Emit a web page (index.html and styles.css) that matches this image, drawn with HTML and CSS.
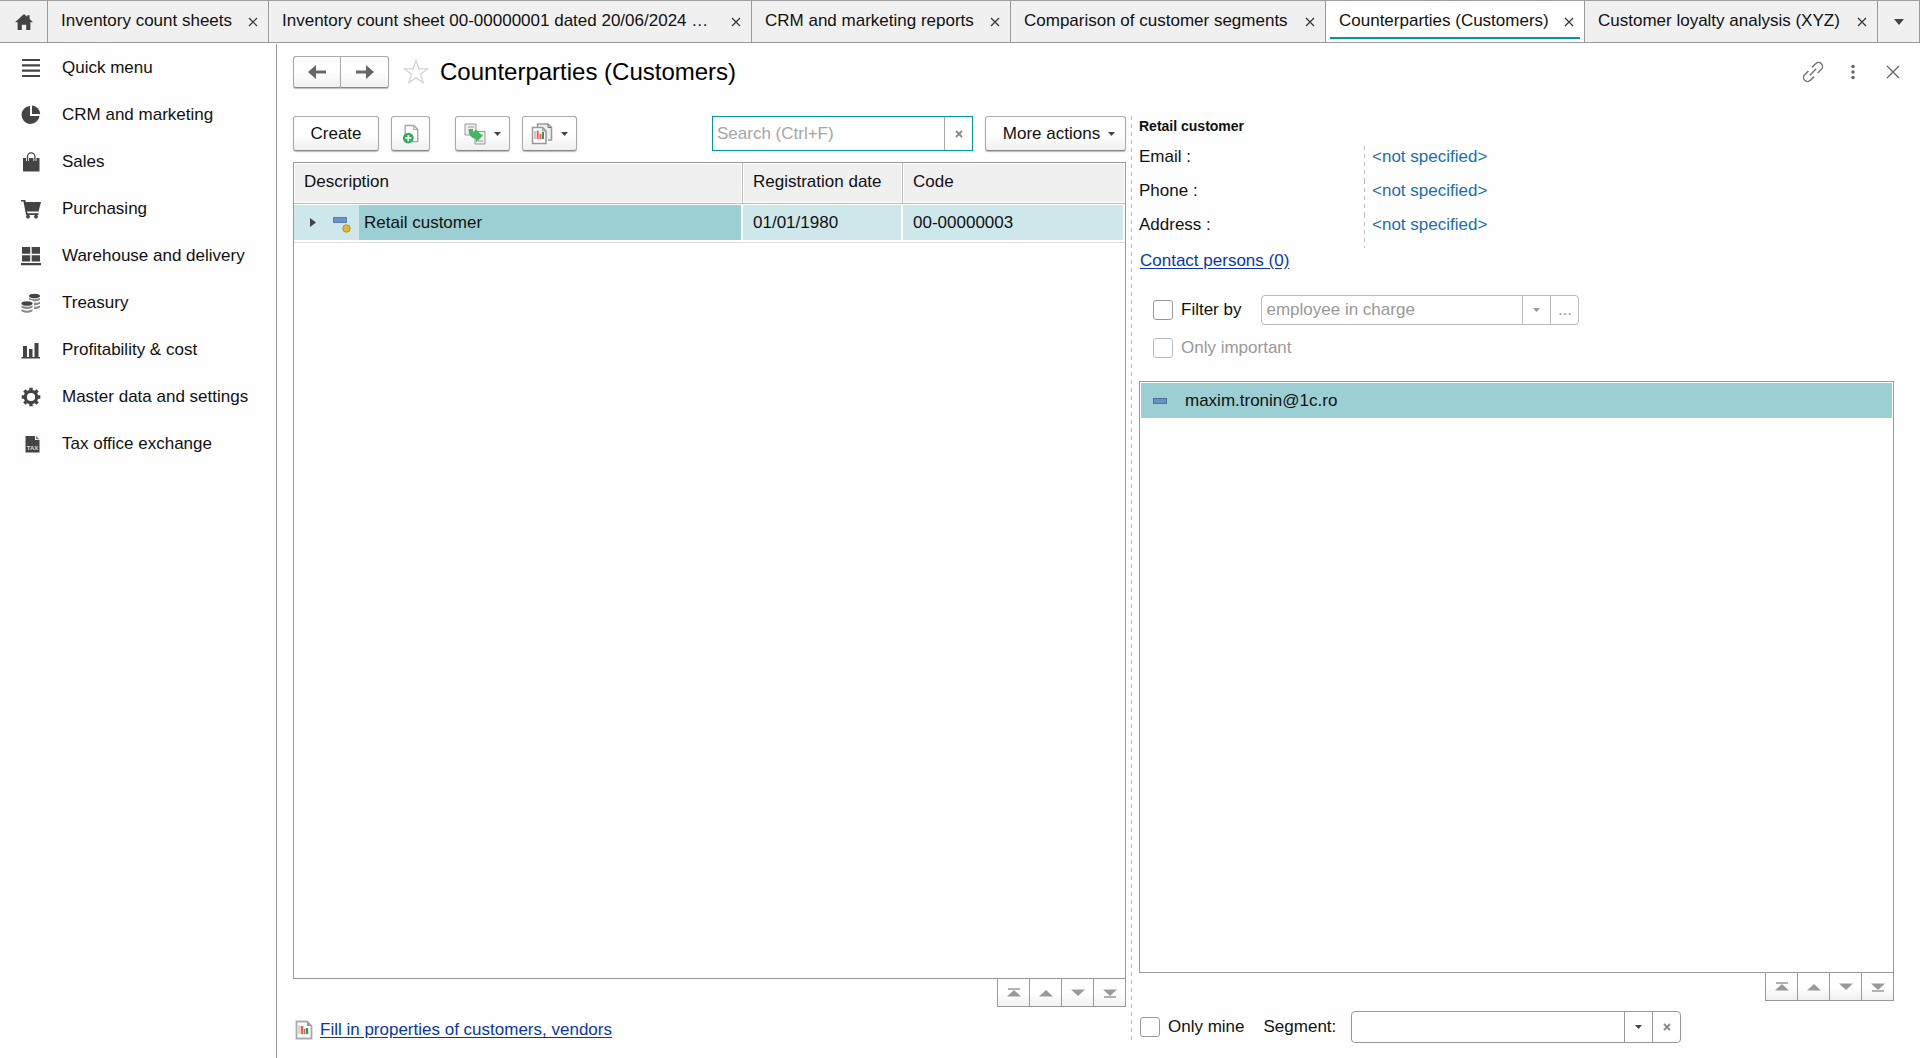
FILE: index.html
```html
<!DOCTYPE html>
<html lang="en">
<head>
  <meta charset="UTF-8" />
  <title>Counterparties (Customers)</title>
  <link rel="stylesheet" href="styles.css">
</head>
<body>
  <nav class="tabs">
    <button class="tab-btn" aria-label="Home">
      <svg width="18" height="16" viewBox="0 0 18 16"><path d="M9 0L0 8.2h2.600V16h4.200v-5.200h4.400V16h4.200V8.200H18L14.600 5V1.200h-2.400v1.600z" fill="#444"/></svg>
    </button>
    <div class="tab"><a href="#">Inventory count sheets</a><button class="tab-close" aria-label="Close"><svg width="10" height="10" viewBox="0 0 10 10"><path d="M1 1l8 8M9 1l-8 8"/></svg></button></div>
    <div class="tab"><a href="#">Inventory count sheet 00-00000001 dated 20/06/2024 …</a><button class="tab-close" aria-label="Close"><svg width="10" height="10" viewBox="0 0 10 10"><path d="M1 1l8 8M9 1l-8 8"/></svg></button></div>
    <div class="tab"><a href="#">CRM and marketing reports</a><button class="tab-close" aria-label="Close"><svg width="10" height="10" viewBox="0 0 10 10"><path d="M1 1l8 8M9 1l-8 8"/></svg></button></div>
    <div class="tab"><a href="#">Comparison of customer segments</a><button class="tab-close" aria-label="Close"><svg width="10" height="10" viewBox="0 0 10 10"><path d="M1 1l8 8M9 1l-8 8"/></svg></button></div>
    <div class="tab active"><a href="#">Counterparties (Customers)</a><button class="tab-close" aria-label="Close"><svg width="10" height="10" viewBox="0 0 10 10"><path d="M1 1l8 8M9 1l-8 8"/></svg></button></div>
    <div class="tab"><a href="#">Customer loyalty analysis (XYZ)</a><button class="tab-close" aria-label="Close"><svg width="10" height="10" viewBox="0 0 10 10"><path d="M1 1l8 8M9 1l-8 8"/></svg></button></div>
    <button class="tab-btn" aria-label="All tabs">
      <svg width="10" height="6" viewBox="0 0 10 6"><path d="M0 0h10L5 6z" fill="#444"/></svg>
    </button>
  </nav>

  <div class="layout">
    <aside class="sidebar">
      <a href="#"><svg width="20" height="20" viewBox="0 0 20 20"><path d="M1 2h18M1 7.300h18M1 12.700h18M1 18h18" stroke="#444" stroke-width="2.200"/></svg>Quick menu</a>
      <a href="#"><svg width="20" height="20" viewBox="0 0 20 20"><path d="M9 1v10h9.500A9 9 0 1 1 9 1z" fill="#444"/><path d="M11 .6A9 9 0 0 1 19.200 9H11z" fill="#444"/></svg>CRM and marketing</a>
      <a href="#"><svg width="20" height="20" viewBox="0 0 20 20"><path d="M2 6h16.500v13.500H2z" fill="#444"/><path d="M6.500 9V4.500a3.700 3.700 0 0 1 7.400 0V9" fill="none" stroke="#fff" stroke-width="3"/><path d="M6.500 9V4.500a3.700 3.700 0 0 1 7.400 0V9" fill="none" stroke="#444" stroke-width="1.300"/></svg>Sales</a>
      <a href="#"><svg width="20" height="20" viewBox="0 0 20 20"><path d="M0 1h4.200l.6 2H20l-2.500 9.500H6l.5 1.800h11V16H5L2.500 2.500H0z" fill="#444"/><circle cx="7" cy="17.700" r="1.900" fill="#444"/><circle cx="15" cy="17.700" r="1.900" fill="#444"/></svg>Purchasing</a>
      <a href="#"><svg width="20" height="20" viewBox="0 0 20 20"><path d="M1 1h8.200v6.700H1zM10.700 1H19v6.700h-8.300zM1 9.200h8.200v6.300H1zM10.700 9.200H19v6.300h-8.300zM0 17h20v2.200H0z" fill="#444"/></svg>Warehouse and delivery</a>
      <a href="#"><svg width="20" height="20" viewBox="0 0 20 20"><ellipse cx="13.500" cy="3" rx="5.500" ry="2.300" fill="#444"/><path d="M8 5q5.500 2.500 11 0V7q-2.500 1.400-6 1.500Q12 7 8 6.800zM13 10q3.500 0 6-1.300v2q-2.500 1.500-6 1.500zM13 13.700q3.500 0 6-1.300v2q-2.500 1.500-6 1.500z" fill="#888"/><ellipse cx="6" cy="10.500" rx="5.500" ry="2.300" fill="#444"/><path d="M.5 12.500q5.500 2.700 11 0v2q-5.500 3-11 0zM.5 16.300q5.500 2.700 11 0v2q-5.500 3-11 0z" fill="#888"/></svg>Treasury</a>
      <a href="#"><svg width="20" height="20" viewBox="0 0 20 20"><path d="M2 6h4v11H2zM8 9h3.500v8H8zM13.500 3h4v14h-4zM.5 17h18.500v1.400H.5z" fill="#444"/></svg>Profitability &amp; cost</a>
      <a href="#"><svg width="20" height="20" viewBox="0 0 20 20"><circle cx="10" cy="10" r="5.700" fill="none" stroke="#444" stroke-width="3.200"/><path d="M10 .7v3M10 16.300v3M.7 10h3M16.300 10h3M3.400 3.400l2.200 2.200M14.400 14.400l2.200 2.200M3.400 16.600l2.200-2.200M14.400 5.600l2.200-2.200" stroke="#444" stroke-width="3.400"/></svg>Master data and settings</a>
      <a href="#"><svg width="20" height="20" viewBox="0 0 20 20"><path d="M4.500 2h9.500v4h4.500v12.500h-14z" fill="#444"/><path d="M15 2l3.500 3.200H15z" fill="#777"/><text x="11.500" y="15.500" class="tax-label">TAX</text></svg>Tax office exchange</a>
    </aside>

    <main class="main">
      <header class="page-header">
        <div class="history">
          <button class="btn" aria-label="Back"><svg width="18" height="14" viewBox="0 0 18 14"><path d="M0 7l8-7v5.500h10v3H8V14z" fill="#666"/></svg></button>
          <button class="btn" aria-label="Forward"><svg width="18" height="14" viewBox="0 0 18 14"><path d="M18 7l-8-7v5.500H0v3h10V14z" fill="#666"/></svg></button>
        </div>
        <button class="plain" aria-label="Add to favourites"><svg width="26" height="26" viewBox="0 0 26 26"><path d="M13 1.500l2.900 8.300 8.600.1-6.900 5.300 2.500 8.500L13 18.600l-7.100 5.100 2.500-8.500L1.500 9.900l8.600-.1z" fill="none" stroke="#d4d4d4" stroke-width="1.300"/></svg></button>
        <h1>Counterparties (Customers)</h1>
        <div class="window-actions">
          <button class="plain" aria-label="Get link"><svg width="20" height="20" viewBox="0 0 20 20" overflow="visible"><path transform="rotate(-45 10 10)" d="M7.500 6H2.200a4 4 0 0 0 0 8h5.300M12.500 6h5.300a4 4 0 0 1 0 8h-5.300M5.500 10h9" fill="none" stroke="#777" stroke-width="1.500"/></svg></button>
          <button class="plain" aria-label="More"><svg width="20" height="20" viewBox="0 0 20 20"><g fill="#666"><circle cx="10" cy="4.500" r="1.700"/><circle cx="10" cy="10" r="1.700"/><circle cx="10" cy="15.500" r="1.700"/></g></svg></button>
          <button class="plain" aria-label="Close"><svg width="20" height="20" viewBox="0 0 20 20"><path d="M4 4l12 12M16 4L4 16" stroke="#666" stroke-width="1.300"/></svg></button>
        </div>
      </header>

      <div class="panels">
        <section class="list-panel">
          <div class="toolbar">
            <button class="btn create">Create</button>
            <button class="btn copy" aria-label="Create by copying"><svg width="18" height="20" viewBox="0 0 20 22"><path d="M3.500 1.500h9.500l4.500 4.500v13.500h-14z" fill="#fff" stroke="#a5a5a5" stroke-width="1.500"/><path d="M13 1.500V6h4.500" fill="none" stroke="#a5a5a5" stroke-width="1.200"/><circle cx="7" cy="15.500" r="6" fill="#2fae5c"/><path d="M7 12v7M3.500 15.500h7" stroke="#fff" stroke-width="1.800"/></svg></button>
            <button class="btn menu first-menu" aria-label="Create based on"><svg width="22" height="22" viewBox="0 0 22 22"><path d="M1 1h11v11H1z" fill="#eee" stroke="#999"/><path d="M4 4h6" stroke="#999"/><path d="M11 8.500h10V21H11z" fill="#eee" stroke="#999"/><path d="M15 12h4M14 18h5" stroke="#999"/><path d="M4.500 6H9v3l3-2.500 6.500 6.500-6.500 6.500V16Q4.500 15 4.500 6z" fill="#45b562"/></svg><svg width="7" height="4" viewBox="0 0 7 4"><path d="M0 0h7L3.500 4z" fill="#444"/></svg></button>
            <button class="btn menu" aria-label="Reports"><svg width="22" height="22" viewBox="0 0 22 22"><path d="M6.500 4V1H17l3.500 3.500V17H17" fill="#eee" stroke="#999" stroke-width="1.500"/><path d="M17 1v3.500h3.500" fill="none" stroke="#777"/><path d="M1.500 4.500h10L15 8v12.500H1.500z" fill="#fff" stroke="#999" stroke-width="1.500"/><path d="M11.500 4.500V8H15" fill="none" stroke="#999"/><path d="M4 8v8" stroke="#999"/><path d="M6.700 7.500V16" stroke="#ec5b4f" stroke-width="2"/><path d="M9.500 11v5" stroke="#ec5b4f" stroke-width="2"/><path d="M12 9v7" stroke="#2f9a52" stroke-width="2"/></svg><svg width="7" height="4" viewBox="0 0 7 4"><path d="M0 0h7L3.500 4z" fill="#444"/></svg></button>
            <div class="search">
              <input type="text" placeholder="Search (Ctrl+F)" aria-label="Search">
              <button aria-label="Clear search"><svg width="8" height="8" viewBox="0 0 8 8"><path d="M1 1l6 6M7 1L1 7" stroke="#888" stroke-width="1.800"/></svg></button>
            </div>
            <button class="btn more">More actions<svg width="7" height="4" viewBox="0 0 7 4"><path d="M0 0h7L3.500 4z" fill="#444"/></svg></button>
          </div>

          <div class="table-box">
            <table>
              <colgroup><col><col class="col-date"><col class="col-code"></colgroup>
              <thead>
                <tr><th>Description</th><th>Registration date</th><th>Code</th></tr>
              </thead>
              <tbody>
                <tr>
                  <td>
                    <div class="cell tree-cell">
                      <button class="plain expander" aria-label="Expand"><svg width="6" height="9" viewBox="0 0 6 9"><path d="M0 0l6 4.500L0 9z" fill="#444"/></svg></button>
                      <svg class="node-icon" width="18" height="16" viewBox="0 0 18 16"><rect x=".5" y=".5" width="13" height="5" fill="#6a94c9" stroke="#5d82ad"/><circle cx="13.500" cy="11.500" r="3.700" fill="#e6b730" stroke="#b58f2a"/></svg>
                      <span class="current">Retail customer</span>
                    </div>
                  </td>
                  <td><div class="cell">01/01/1980</div></td>
                  <td><div class="cell">00-00000003</div></td>
                </tr>
              </tbody>
            </table>
          </div>
          <div class="pager">
            <button aria-label="First"><svg width="14" height="10" viewBox="0 0 14 10"><path d="M1 1h12" stroke="#999" stroke-width="1.500"/><path d="M0 8.500L7 2l7 6.500z" fill="#999"/></svg></button>
            <button aria-label="Previous"><svg width="14" height="10" viewBox="0 0 14 10"><path d="M0 8.500L7 2l7 6.500z" fill="#999"/></svg></button>
            <button aria-label="Next"><svg width="14" height="10" viewBox="0 0 14 10"><path d="M0 1.500L7 8l7-6.500z" fill="#999"/></svg></button>
            <button aria-label="Last"><svg width="14" height="10" viewBox="0 0 14 10"><path d="M0 1.500L7 8l7-6.500z" fill="#999"/><path d="M1 9h12" stroke="#999" stroke-width="1.500"/></svg></button>
          </div>
          <div class="fill-row">
            <svg width="18" height="20" viewBox="0 0 18 20"><path d="M1.500 1.500H12l4.500 4.500v12.500h-15z" fill="#fff" stroke="#aaa" stroke-width="1.800"/><path d="M12 1.500V6h4.500z" fill="#999"/><path d="M4 5v9" stroke="#aaa"/><path d="M7 6v8" stroke="#ec5b4f" stroke-width="2.600"/><path d="M9.600 9v5" stroke="#c66" stroke-width="1.400"/><path d="M12 8v6" stroke="#2f9a52" stroke-width="2.400"/></svg>
            <a class="link" href="#">Fill in properties of customers, vendors</a>
          </div>
        </section>

        <section class="info-panel">
          <h2>Retail customer</h2>
          <dl class="contacts">
            <dt>Email :</dt><dd><a href="#">&lt;not specified&gt;</a></dd>
            <dt>Phone :</dt><dd><a href="#">&lt;not specified&gt;</a></dd>
            <dt>Address :</dt><dd><a href="#">&lt;not specified&gt;</a></dd>
          </dl>
          <div class="persons"><a class="link" href="#">Contact persons (0)</a></div>

          <div class="filters">
            <div class="filter-row">
              <input type="checkbox" id="filterBy"><label for="filterBy">Filter by</label>
              <div class="combo disabled employee">
                <div class="select">
                  <select disabled aria-label="Employee in charge"><option>employee in charge</option></select>
                  <span class="arrow"><svg width="7" height="4" viewBox="0 0 7 4"><path d="M0 0h7L3.500 4z" fill="#999"/></svg></span>
                </div>
                <button disabled aria-label="Choose">...</button>
              </div>
            </div>
            <div class="filter-row">
              <input type="checkbox" id="onlyImportant" disabled><label for="onlyImportant">Only important</label>
            </div>
          </div>

          <ul class="mail-list">
            <li><svg width="14" height="6" viewBox="0 0 14 6"><rect x=".5" y=".5" width="13" height="5" fill="#6a8fc4" stroke="#4d70a8"/></svg>maxim.tronin@1c.ro</li>
          </ul>
          <div class="pager">
            <button aria-label="First"><svg width="14" height="10" viewBox="0 0 14 10"><path d="M1 1h12" stroke="#999" stroke-width="1.500"/><path d="M0 8.500L7 2l7 6.500z" fill="#999"/></svg></button>
            <button aria-label="Previous"><svg width="14" height="10" viewBox="0 0 14 10"><path d="M0 8.500L7 2l7 6.500z" fill="#999"/></svg></button>
            <button aria-label="Next"><svg width="14" height="10" viewBox="0 0 14 10"><path d="M0 1.500L7 8l7-6.500z" fill="#999"/></svg></button>
            <button aria-label="Last"><svg width="14" height="10" viewBox="0 0 14 10"><path d="M0 1.500L7 8l7-6.500z" fill="#999"/><path d="M1 9h12" stroke="#999" stroke-width="1.500"/></svg></button>
          </div>

          <div class="segment-row">
            <input type="checkbox" id="onlyMine"><label for="onlyMine">Only mine</label>
            <label for="segment" class="segment-label">Segment:</label>
            <div class="combo segment">
              <div class="select">
                <select id="segment"><option></option></select>
                <span class="arrow"><svg width="7" height="4" viewBox="0 0 7 4"><path d="M0 0h7L3.500 4z" fill="#444"/></svg></span>
              </div>
              <button aria-label="Clear segment"><svg width="8" height="8" viewBox="0 0 8 8"><path d="M1 1l6 6M7 1L1 7" stroke="#888" stroke-width="1.800"/></svg></button>
            </div>
          </div>
        </section>
      </div>
    </main>
  </div>
</body>
</html>
```

FILE: styles.css
```css
* {
  box-sizing: border-box;
}

body {
  margin: 0;
  min-height: 100vh;
  display: flex;
  flex-direction: column;
  font-family: "Liberation Sans", Arial, sans-serif;
  font-size: 17px;
  line-height: 20px;
  color: #111;
  background: #fefefe;
}

button,
input,
select {
  font: inherit;
  color: inherit;
  margin: 0;
}

button {
  display: flex;
  align-items: center;
  justify-content: center;
  padding: 0;
  border: none;
  background: none;
  cursor: pointer;
}

svg {
  flex: none;
}

/* tabs */
.tabs {
  display: grid;
  grid-template-columns: 48px 221fr 483fr 259fr 315fr 259fr 293fr 42px;
  height: 43px;
  background: #f0f0f0;
  border-top: 1px solid #a0a0a0;
  border-bottom: 1px solid #999;
}

.tab-btn,
.tab {
  border-right: 1px solid #999;
}

.tab {
  position: relative;
  display: flex;
  align-items: center;
  justify-content: space-between;
  padding: 0 10px 2px 13px;
  white-space: nowrap;
}

.tab a {
  color: inherit;
  text-decoration: none;
}

.tab-close {
  width: 10px;
  height: 20px;
  padding-top: 3px;
  stroke: #333;
  stroke-width: 1.2;
}

.tab.active {
  background: #fff;
}

.tab.active::after {
  content: "";
  position: absolute;
  left: 4px;
  right: 4px;
  bottom: 3px;
  height: 2px;
  background: #0097a0;
}

.layout {
  flex: 1;
  display: flex;
}

/* sidebar */
.sidebar {
  width: 277px;
  flex: none;
  margin-top: 1px;
  border-right: 1px solid #999;
}

.sidebar a {
  display: flex;
  align-items: center;
  gap: 21px;
  height: 47px;
  padding-left: 21px;
  color: inherit;
  text-decoration: none;
}

.tax-label {
  font-size: 6px;
  font-weight: bold;
  fill: #ddd;
  text-anchor: middle;
}

/* main */
.main {
  flex: 1;
  display: flex;
  flex-direction: column;
  min-width: 0;
  padding: 13px 26px 15px 16px;
}

.page-header {
  display: flex;
  align-items: center;
  height: 32px;
  margin-bottom: 28px;
}

.btn {
  height: 35px;
  border: 1px solid #aaa;
  border-bottom-color: #888;
  border-radius: 3px;
  background: linear-gradient(#fff 50%, #f0f0f0);
  box-shadow: 0 1px 1px #bbb;
}

.history {
  display: flex;
  margin-right: 14px;
}

.history .btn {
  width: 49px;
  height: 32px;
}

.history .btn:first-child {
  width: 47px;
  border-right: none;
  border-radius: 3px 0 0 3px;
}

.history .btn:last-child {
  border-radius: 0 3px 3px 0;
}

h1 {
  margin: 0 0 0 11px;
  font-size: 24px;
  font-weight: normal;
  line-height: 28px;
  color: #000;
}

.window-actions {
  display: flex;
  gap: 20px;
  margin-left: auto;
  margin-right: -9px;
}

.panels {
  flex: 1;
  display: grid;
  grid-template-columns: 833fr 763fr;
  gap: 5px;
}

.list-panel {
  display: flex;
  flex-direction: column;
  min-width: 0;
}

/* toolbar */
.toolbar {
  display: flex;
  gap: 12px;
  margin-bottom: 11px;
}

.create {
  width: 86px;
}

.copy {
  width: 39px;
}

.menu {
  width: 55px;
  gap: 8px;
}

.first-menu {
  margin-left: 13px;
}

.search {
  display: flex;
  width: 261px;
  margin-left: auto;
  border: 1px solid #0097a0;
  background: #fff;
}

.search input {
  flex: 1;
  min-width: 0;
  padding: 0 4px;
  border: none;
  outline: none;
  background: none;
}

.search input::placeholder {
  color: #a5a5a5;
}

.search button {
  width: 28px;
  border-left: 1px solid #aaa;
}

.more {
  width: 141px;
  gap: 8px;
  padding-left: 7px;
}

/* customers table */
.table-box {
  flex: 1;
  border: 1px solid #999;
  background: #fff;
}

table {
  width: 100%;
  table-layout: fixed;
  border-collapse: separate;
  border-spacing: 0;
}

.col-date {
  width: 160px;
}

.col-code {
  width: 222px;
}

th {
  height: 41px;
  padding: 0 10px 3px;
  font-weight: normal;
  text-align: left;
  background: #f0f0f0;
  border-right: 1px solid #bbb;
  border-bottom: 1px solid #bbb;
  box-shadow: inset 0 0 0 1px #fff;
}

th:last-child {
  border-right: none;
}

td {
  padding: 1px 2px 2px 0;
  border-bottom: 1px solid #ddd;
}

.cell {
  display: flex;
  align-items: center;
  height: 35px;
  padding-left: 10px;
  background: #cde7ea;
}

.tree-cell {
  padding-left: 16px;
}

.expander {
  width: 6px;
  margin-right: 17px;
}

.node-icon {
  margin-top: 5px;
  margin-right: 8px;
}

.current {
  flex: 1;
  padding-left: 5px;
  line-height: 35px;
  background: #9bcfd3;
}

.pager {
  display: flex;
  align-self: flex-end;
  border: 1px solid #999;
  border-top: none;
}

.pager button {
  width: 31px;
  height: 27px;
  background: linear-gradient(#fff 50%, #f0f0f0);
}

.pager button + button {
  border-left: 1px solid #999;
  width: 32px;
}

.link {
  color: #0a37a8;
  text-decoration: underline;
  text-underline-offset: 2px;
}

.fill-row {
  display: flex;
  align-items: center;
  gap: 7px;
  height: 20px;
  margin: 13px 0 3px;
  padding-left: 2px;
}

/* customer info */
.info-panel {
  display: flex;
  flex-direction: column;
  min-width: 0;
  padding-left: 8px;
}

/* dashed separators, 4px dash and 4px gap */
.info-panel,
.contacts dd {
  background: repeating-linear-gradient(#bbb 0 4px, transparent 4px 8px) left top / 1px 100% no-repeat;
}

h2 {
  margin: 0 0 10px;
  font-size: 14px;
  line-height: 20px;
}

.contacts {
  display: grid;
  grid-template-columns: 225px 1fr;
  margin: 0;
}

.contacts dt,
.contacts dd {
  margin: 0;
  padding-top: 1px;
  height: 34px;
}

.contacts dd {
  padding-left: 8px;
}

.contacts dd a {
  color: #1c6db0;
  text-decoration: none;
}

.persons {
  margin-top: 3px;
  padding-left: 1px;
}

.filters {
  padding: 24px 0 0 14px;
}

.filter-row {
  display: flex;
  align-items: center;
  height: 30px;
  margin-bottom: 8px;
}

input[type="checkbox"] {
  appearance: none;
  width: 20px;
  height: 20px;
  margin-right: 8px;
  border: 1px solid #999;
  border-radius: 3px;
  background: #fff;
}

input:disabled {
  border-color: #bbb;
}

input:disabled + label {
  color: #999;
}

.combo {
  display: flex;
  border: 1px solid #999;
  border-radius: 4px;
  background: #fff;
}

.select {
  flex: 1;
  display: grid;
}

.select select,
.select .arrow {
  grid-area: 1 / 1;
}

select {
  appearance: none;
  padding: 0 4px;
  border: none;
  background: none;
}

.arrow {
  display: flex;
  align-items: center;
  justify-content: center;
  justify-self: end;
  width: 28px;
  border-left: 1px solid #999;
  pointer-events: none;
}

.combo button {
  width: 28px;
  border-left: 1px solid #999;
}

.combo.disabled,
.combo.disabled .arrow,
.combo.disabled button {
  border-color: #bbb;
}

.combo.disabled select,
.combo.disabled button {
  color: #999;
  opacity: 1;
}

.employee {
  width: 318px;
  height: 30px;
  margin-left: 20px;
}

.mail-list {
  flex: 1;
  margin: 10px 0 0;
  padding: 1px;
  border: 1px solid #999;
  background: #fff;
  list-style: none;
}

.mail-list li {
  display: flex;
  align-items: center;
  gap: 18px;
  height: 35px;
  padding-left: 12px;
  background: #9bcfd3;
}

.segment-row {
  display: flex;
  align-items: center;
  height: 32px;
  margin-top: 10px;
  padding-left: 1px;
}

.segment-label {
  margin: 0 15px 0 19px;
}

.segment {
  width: 330px;
  height: 32px;
}
```
